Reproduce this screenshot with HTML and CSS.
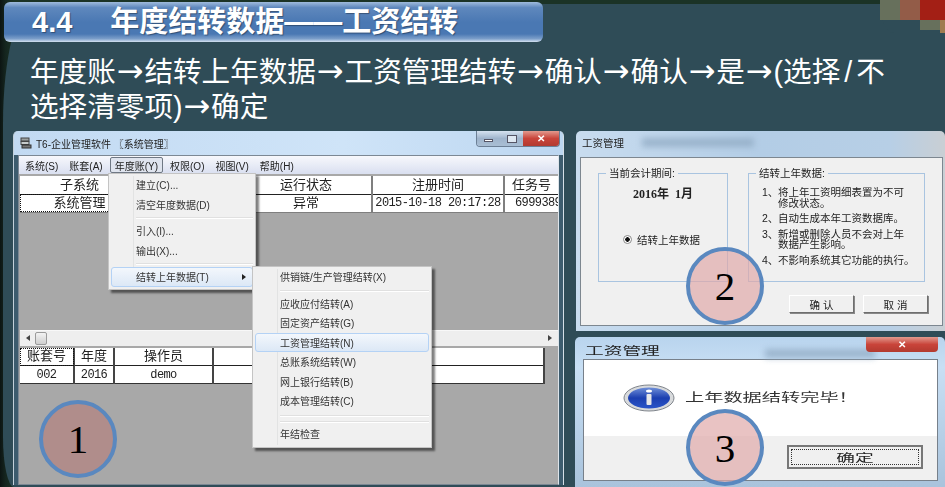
FILE: index.html
```html
<!DOCTYPE html>
<html lang="zh-CN">
<head>
  <meta charset="UTF-8">
  <title>年度结转数据——工资结转</title>
  <link rel="stylesheet" href="styles.css">
</head>
<body>

<div class="slide">
  <div class="panel"></div>
  <div class="mosaic">
    <i class="m1"></i><i class="m2"></i><i class="m3"></i><i class="m4"></i><i class="m5"></i>
  </div>

  <header class="title-bar">
    <span class="title-num">4.4</span>
    <span class="title-text">年度结转数据——工资结转</span>
  </header>

  <p class="steps">年度账<span class="arr">→</span>结转上年数据<span class="arr">→</span>工资管理结转<span class="arr">→</span>确认<span class="arr">→</span>确认<span class="arr">→</span>是<span class="arr">→</span>(选择<span class="slash">/</span>不<br>选择清零项)<span class="arr">→</span>确定</p>

  <!-- window 1: system manager -->
  <section class="win win-main">
    <div class="win-title">
      <svg class="app-icon" width="12" height="12" viewBox="0 0 12 12">
        <rect x="1" y="1" width="8" height="3" fill="#9aa0a0" stroke="#444"/>
        <rect x="1" y="4.5" width="8" height="3" fill="#c8cccc" stroke="#444"/>
        <rect x="2" y="8" width="9" height="3" fill="#777" stroke="#333"/>
      </svg>
      <span>T6-企业管理软件 〖系统管理〗</span>
      <div class="win-btns">
        <span class="btn-min"><i></i></span>
        <span class="btn-max"><i></i></span>
        <span class="btn-close">✕</span>
      </div>
    </div>
    <div class="win-body">
      <nav class="menubar">
        <span>系统(S)</span>
        <span>账套(A)</span>
        <span class="open">年度账(Y)</span>
        <span>权限(O)</span>
        <span>视图(V)</span>
        <span>帮助(H)</span>
      </nav>
      <div class="client">
        <table class="grid grid-top">
          <colgroup><col class="c1"><col class="c2"><col class="c3"><col class="c4"><col class="c5"></colgroup>
          <tr><th>子系统</th><th></th><th>运行状态</th><th>注册时间</th><th>任务号</th></tr>
          <tr>
            <td class="focus">系统管理</td><td></td><td>异常</td>
            <td class="mono">2015-10-18 20:17:28</td><td class="mono clip">6999389</td>
          </tr>
        </table>
        <div class="spacer"></div>
        <div class="scrollbar">
          <span class="arrow-l"></span><span class="thumb"></span><span class="arrow-r"></span>
        </div>
        <table class="grid grid-bottom">
          <colgroup><col class="b1"><col class="b2"><col class="b3"><col class="b4"></colgroup>
          <tr><th class="focus">账套号</th><th>年度</th><th>操作员</th><th></th></tr>
          <tr><td class="mono">002</td><td class="mono">2016</td><td class="mono">demo</td><td></td></tr>
        </table>
      </div>
    </div>

    <ul class="menu menu-year">
      <li>建立(C)...</li>
      <li>清空年度数据(D)</li>
      <li class="sep"></li>
      <li>引入(I)...</li>
      <li>输出(X)...</li>
      <li class="sep"></li>
      <li class="active has-sub">结转上年数据(T)</li>
    </ul>
    <ul class="menu menu-sub">
      <li>供销链/生产管理结转(X)</li>
      <li class="sep"></li>
      <li>应收应付结转(A)</li>
      <li>固定资产结转(G)</li>
      <li class="active">工资管理结转(N)</li>
      <li>总账系统结转(W)</li>
      <li>网上银行结转(B)</li>
      <li>成本管理结转(C)</li>
      <li class="sep sep-double"></li>
      <li>年结检查</li>
    </ul>
  </section>

  <!-- window 2: carry forward dialog -->
  <section class="win win-dialog">
    <div class="win-title">
      <span>工资管理</span>
      <span class="smudge smudge-2"></span>
    </div>
    <div class="dialog-body">
      <div class="dialog-groups">
        <fieldset class="group group-left">
          <legend>当前会计期间:</legend>
          <div class="period">2016年&nbsp; 1月</div>
          <label class="radio"><i></i>结转上年数据</label>
        </fieldset>
        <fieldset class="group group-right">
          <legend>结转上年数据:</legend>
          <ol class="notes">
            <li><b>1、</b><span>将上年工资明细表置为不可<br>修改状态。</span></li>
            <li><b>2、</b><span>自动生成本年工资数据库。</span></li>
            <li><b>3、</b><span>新增或删除人员不会对上年<br>数据产生影响。</span></li>
            <li><b>4、</b><span>不影响系统其它功能的执行。</span></li>
          </ol>
        </fieldset>
      </div>
      <div class="dialog-btns">
        <button class="btn">确 认</button>
        <button class="btn">取 消</button>
      </div>
    </div>
  </section>

  <!-- window 3: finished message -->
  <section class="win win-msg">
    <div class="win-title">
      <span class="stretch">工资管理</span>
      <span class="smudge smudge-3"></span>
      <span class="btn-close msg-close">✕</span>
    </div>
    <div class="msg-body">
      <div class="msg-top">
        <svg class="info" width="52" height="28" viewBox="0 0 52 28">
          <defs>
            <linearGradient id="infoFill" x1="0" y1="0" x2="0" y2="1">
              <stop offset="0" stop-color="#6f8fd8"/>
              <stop offset=".5" stop-color="#1c3fb0"/>
              <stop offset="1" stop-color="#2a55c8"/>
            </linearGradient>
          </defs>
          <ellipse cx="26" cy="14" rx="25" ry="13" fill="#d8dadc" stroke="#80858c"/>
          <ellipse cx="26" cy="14" rx="21" ry="10.5" fill="url(#infoFill)"/>
          <ellipse cx="26" cy="7" rx="3" ry="1.6" fill="#fff"/>
          <rect x="23.5" y="10" width="5" height="11" rx="1" fill="#e8e8e8"/>
        </svg>
        <span class="msg-text">上年数据结转完毕！</span>
      </div>
      <div class="msg-bottom">
        <button class="btn btn-ok"><span class="stretch">确定</span></button>
      </div>
    </div>
  </section>

  <div class="badge badge-1">1</div>
  <div class="badge badge-2">2</div>
  <div class="badge badge-3">3</div>
</div>

</body>
</html>
```

FILE: styles.css
```css
* {
  box-sizing: border-box;
}
html, body {
  margin: 0;
  padding: 0;
}
body {
  font-family: "Liberation Sans", "Noto Sans CJK SC", sans-serif;
  background: #2f4c57;
}
.slide {
  position: relative;
  width: 945px;
  height: 487px;
  overflow: hidden;
  background: linear-gradient(90deg, #0c1412 0, #14241e 5px, #1b3326 14px);
}
.panel {
  position: absolute;
  left: 3px;
  top: 4px;
  right: 0;
  bottom: 0;
  background: #2f4c57;
  border-top-left-radius: 30px 120px;
  border-bottom-left-radius: 11px 50px;
}
.mosaic {
  position: absolute;
  top: 0;
  right: 0;
  width: 65px;
  height: 33px;
  background: #2f4c57;
  border-bottom-left-radius: 14px 30px;
}
.mosaic i {
  position: absolute;
  height: 20px;
}
.m1 { left: 0; top: 0; width: 20px; background: #67705c; }
.m2 { left: 20px; top: 0; width: 20px; background: #935c48; }
.m3 { left: 40px; top: 0; width: 25px; background: #a31f15; }
.m4 { left: 40px; top: 20px; width: 20px; height: 10px !important; background: #67705c; }
.m5 { left: 60px; top: 20px; width: 5px; height: 13px !important; background: #a07c50; }

.title-bar {
  position: absolute;
  left: 4px;
  top: 2px;
  width: 539px;
  height: 40px;
  padding-left: 28px;
  display: flex;
  align-items: center;
  gap: 38px;
  color: #fff;
  font-weight: bold;
  border-radius: 6px;
  background: linear-gradient(#9fbbdc 0, #5f88bd 14%, #4a78b3 50%, #4a78b3 80%, #7d9fca 92%, #d5e2f1 100%);
  text-shadow: 1px 1px 1px rgba(0, 0, 0, .35);
}
.title-num {
  font-size: 29px;
}
.title-text {
  font-size: 29px;
  line-height: 1;
}
.steps {
  position: absolute;
  left: 30px;
  top: 55px;
  margin: 0;
  color: #fff;
  font-size: 28.6px;
  line-height: 35px;
  white-space: nowrap;
}
.arr {
  display: inline-block;
  width: 28.6px;
  height: 30px;
  line-height: 30px;
  text-align: center;
  vertical-align: baseline;
  font-family: "DejaVu Sans", sans-serif;
  font-size: 32px;
}
.slash {
  padding: 0 4px;
}

/* windows */
.win {
  position: absolute;
  background: linear-gradient(#b9d4ee, #c8dff4 30px, #a9c3dc);
  border-radius: 5px 5px 0 0;
  filter: blur(.35px);
}
.win-main {
  left: 13px;
  top: 131px;
  width: 551px;
  height: 354px;
  border-left: 1px solid #c3d0da;
  border-right: 1px solid #d4dee6;
  background: linear-gradient(90deg, #c2daf2, #cfe4f8 60%, #bcd6f0) top / 100% 24px no-repeat, #3d5c6e;
}
.win-dialog {
  left: 576px;
  top: 131px;
  width: 369px;
  height: 200px;
  background: linear-gradient(90deg, #c8dcef, #b3cde6 50%, #b7cfe6 85%, #c9cfd4);
}
.win-msg { left: 575px; top: 337px; width: 370px; height: 150px; }

.win-title {
  height: 24px;
  padding-left: 6px;
  display: flex;
  align-items: center;
  gap: 4px;
  font-size: 10px;
  color: #222;
}
.win-dialog .win-title {
  font-size: 10.5px;
  height: 23px;
  align-items: center;
}
.app-icon {
  flex: none;
}
.win-btns {
  position: absolute;
  right: 3px;
  top: 0;
  width: 84px;
  height: 16px;
  display: flex;
  border: 1px solid #6c7f95;
  border-top: 0;
  border-radius: 0 0 4px 4px;
  overflow: hidden;
}
.win-btns span {
  display: flex;
  align-items: center;
  justify-content: center;
}
.btn-min, .btn-max {
  width: 23px;
  background: linear-gradient(#d5e2f0, #9fb4cc 50%, #a9bed4);
}
.btn-min i {
  width: 9px;
  height: 3px;
  margin-top: 4px;
  background: #fff;
  border: 1px solid #556;
}
.btn-max i {
  width: 10px;
  height: 8px;
  background: #dfe8f2;
  border: 1px solid #556;
}
.btn-close {
  flex: 1;
  font-size: 10px;
  font-weight: bold;
  color: #fff;
  background: linear-gradient(#e29a8e, #c9443a 50%, #b23a30);
}
.win-body {
  margin: 0 4px 0 4px;
  height: 330px;
  border: 1px solid #7c8894;
  border-right-color: #dde4ea;
  display: flex;
  flex-direction: column;
}
.menubar {
  height: 18px;
  flex: none;
  padding-left: 2px;
  display: flex;
  align-items: center;
  font-size: 10px;
  color: #222;
  background: linear-gradient(#f7f8fc, #d9dff0);
}
.menubar span {
  height: 16px;
  padding: 0 4px;
  margin-right: 3px;
  display: flex;
  align-items: center;
}
.menubar .open {
  background: #dfe4ee;
  border: 1px solid #6f7884;
  border-radius: 2px;
}
.client {
  flex: 1;
  background: #a8a8a8;
  padding: 2px 0 0 1px;
  display: flex;
  flex-direction: column;
}

/* tables */
.grid {
  border-collapse: collapse;
  table-layout: fixed;
  background: #fff;
  color: #222;
  font-size: 13px;
  font-weight: normal;
}
.grid th, .grid td {
  height: 18px;
  padding: 0;
  font-weight: normal;
  text-align: center;
  line-height: 16px;
  overflow: hidden;
  white-space: nowrap;
  border-right: 2px solid #7f7f7f;
  border-bottom: 1px solid #222;
}
.grid-top { width: 538px; }
.grid-top tr:last-child td { border-bottom-color: #7f7f7f; }
.c1 { width: 120px; }
.c2 { width: 100px; }
.c3 { width: 132px; }
.c4 { width: 132px; }
.c5 { width: 54px; }
.grid-top th:last-child, .grid-top td:last-child {
  border-right: 0;
}
.grid-bottom { width: 524px; }
.grid-bottom th, .grid-bottom td { border-right-color: #444; }
.grid-bottom tr:last-child td { border-bottom-color: #333; }
.b1 { width: 54px; }
.b2 { width: 40px; }
.b3 { width: 99px; }
.b4 { width: 331px; }
.mono {
  font-family: "Liberation Mono", monospace;
  font-size: 12px;
  letter-spacing: -.6px;
}
.clip {
  text-align: left !important;
  padding-left: 10px !important;
}
.focus {
  outline: 1px dotted #111;
  outline-offset: -1px;
}
.spacer {
  height: 117px;
  flex: none;
}
.scrollbar {
  height: 16px;
  flex: none;
  margin-bottom: 2px;
  background: #eeeeee;
  border-top: 1px solid #f8f8f8;
  padding: 0 6px;
  display: flex;
  align-items: center;
  gap: 5px;
}
.arrow-l, .arrow-r {
  width: 0;
  height: 0;
  border-top: 3px solid transparent;
  border-bottom: 3px solid transparent;
}
.arrow-l { border-right: 4px solid #444; }
.arrow-r { border-left: 4px solid #444; margin-left: auto; }
.thumb {
  width: 12px;
  height: 13px;
  background: linear-gradient(#f2f2f2, #cfcfcf);
  border: 1px solid #9a9a9a;
  border-radius: 2px;
}

/* menus */
.menu {
  position: absolute;
  margin: 0;
  padding: 2px;
  list-style: none;
  font-size: 10px;
  color: #333;
  background: #f0f0f0;
  border: 1px solid #c4c4c4;
  box-shadow: 3px 3px 2px rgba(0, 0, 0, .5);
}
.menu::before {
  content: "";
  position: absolute;
  left: 24px;
  top: 2px;
  bottom: 2px;
  width: 1px;
  background: #e2e3e3;
}
.menu-year { left: 94px; top: 42px; width: 148px; height: 117px; padding-top: 1px; }
.menu-sub { left: 238px; top: 135px; width: 180px; height: 182px; padding-top: 0; }
.menu li {
  height: 19.5px;
  padding-left: 25px;
  display: flex;
  align-items: center;
  position: relative;
}
.menu .sep {
  height: 7px;
  padding: 0;
  margin-left: 25px;
  background: linear-gradient(transparent 3px, #e0e0e0 3px, #e0e0e0 4px, #fff 4px, #fff 5px, transparent 5px);
}
.menu .sep-double {
  height: 12px;
  margin-top: 1px;
  margin-bottom: 0;
  background: linear-gradient(transparent 3px, #e0e0e0 3px, #e0e0e0 4px, #fff 4px, #fff 5px, transparent 5px, transparent 9px, #e0e0e0 9px, #e0e0e0 10px, #fff 10px, #fff 11px, transparent 11px);
}
.menu .active {
  background: linear-gradient(#f3f7fc, #dce8f6);
  border: 1px solid #b4d2f5;
  border-radius: 3px;
  padding-left: 24px;
}
.menu .has-sub::after {
  content: "";
  position: absolute;
  right: 6px;
  top: 6px;
  border-top: 3px solid transparent;
  border-bottom: 3px solid transparent;
  border-left: 4px solid #222;
}

/* dialog */
.smudge {
  height: 9px;
  background: #8fa9c2;
  filter: blur(3px);
  opacity: .75;
}
.smudge-2 { width: 112px; margin-left: 14px; }
.dialog-body {
  margin: 3px 2px 0 4px;
  height: 169px;
  background: #f0f0f0;
  border: 1px solid #7d8790;
  padding: 8px 17px 0 17px;
  display: flex;
  flex-direction: column;
}
.dialog-groups {
  display: flex;
  gap: 20px;
  height: 116px;
}
.group {
  margin: 0;
  padding: 0;
  height: 116px;
  border: 1px solid #a9c4e0;
  font-size: 10.5px;
  color: #222;
}
.group legend {
  padding: 0 3px;
  margin-left: 7px;
  line-height: 14px;
  font-size: 10.5px;
}
.group-left { width: 130px; }
.group-right { width: 177px; }
.period {
  margin-top: 4px;
  text-align: center;
  font-family: "Liberation Serif", "Noto Sans CJK SC", serif;
  font-weight: bold;
  font-size: 12px;
}
.radio {
  margin: 30px 0 0 24px;
  display: flex;
  align-items: center;
  gap: 5px;
}
.radio i {
  width: 9px;
  height: 9px;
  border-radius: 50%;
  border: 1px solid #8a8a8a;
  background: radial-gradient(#111 0 2px, #fff 2.5px);
}
.notes {
  list-style: none;
  margin: 7px 0 0;
  padding: 0 0 0 13px;
  line-height: 10.5px;
}
.notes li {
  display: flex;
  margin-bottom: 5px;
}
.notes b {
  width: 16px;
  font-weight: normal;
}
.dialog-btns {
  margin-top: 13px;
  display: flex;
  justify-content: flex-end;
  gap: 9px;
  margin-right: -3px;
}
.btn {
  width: 65px;
  height: 18px;
  padding: 0;
  font-family: inherit;
  font-size: 10.5px;
  color: #222;
  background: #f0f0f0;
  border: 1px solid;
  border-color: #fff #6e6e6e #6e6e6e #fff;
  box-shadow: 1px 1px 0 #888;
}

/* message box */
.stretch {
  display: inline-block;
  transform: scaleX(1.7);
  transform-origin: 0 50%;
}
.win-msg .win-title {
  padding: 3px 0 0 10px;
  height: 22px;
  font-size: 11px;
}
.smudge-3 { width: 110px; margin-left: 132px; margin-top: 7px; }
.msg-close {
  position: absolute;
  left: 291px;
  top: 0;
  width: 72px;
  height: 15px;
  padding: 0;
  display: flex;
  align-items: center;
  justify-content: center;
  border-radius: 0 0 4px 4px;
}
.msg-body {
  margin: 0 7px 0 8px;
  height: 122px;
  border: 1px solid #77808a;
  display: flex;
  flex-direction: column;
}
.msg-top {
  height: 76px;
  background: #fff;
  display: flex;
  align-items: center;
  padding: 0 0 0 39px;
  gap: 10px;
}
.msg-text {
  display: inline-block;
  font-size: 12px;
  line-height: 1;
  color: #333;
  transform: scaleX(1.6);
  transform-origin: 0 50%;
  white-space: nowrap;
}
.msg-bottom {
  flex: 1;
  background: #f0f0f0;
  padding: 9px 14px 0 0;
  display: flex;
  justify-content: flex-end;
  align-items: flex-start;
}
.btn-ok {
  width: 136px;
  height: 24px;
  border: 2px solid #777;
  outline: 1px dotted #333;
  outline-offset: -5px;
  box-shadow: none;
  font-size: 11px;
}
.btn-ok .stretch {
  transform-origin: 50% 50%;
  transform: scaleX(1.7);
}

/* numbered circles */
.badge {
  position: absolute;
  width: 78px;
  height: 78px;
  border-radius: 50%;
  border: 4px solid #5a88bf;
  display: flex;
  align-items: center;
  justify-content: center;
  font-family: "Liberation Serif", serif;
  font-size: 41px;
  color: #000;
}
.badge-1 { left: 39px; top: 400px; background: #b08d8b; }
.badge-2 { left: 686px; top: 247px; background: rgba(224, 170, 170, .7); }
.badge-3 { left: 686px; top: 409px; height: 77px; background: rgba(224, 170, 170, .7); }
```
